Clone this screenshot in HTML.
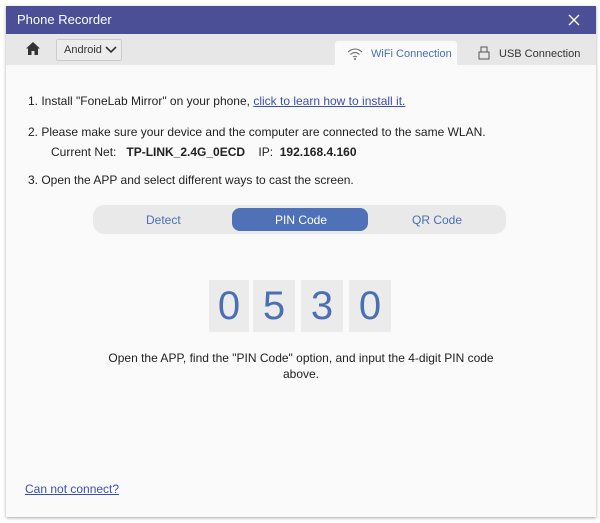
<!DOCTYPE html><html><head><style>
body{margin:0;width:600px;height:523px;background:#fff;font-family:"Liberation Sans",sans-serif;position:relative;overflow:hidden}
.win{position:absolute;left:6px;top:6px;width:590px;height:511px;background:#fafafa;box-shadow:0 1px 3px rgba(0,0,0,.35)}
.title{position:absolute;left:0;top:0;width:590px;height:28px;background:#4b4f96;color:#fff;font-size:13px;line-height:28px}
.tb{position:absolute;left:0;top:28px;width:590px;height:31px;background:#e7e7e7}
.t{position:absolute;font-size:12px;color:#222;white-space:nowrap}
.digit{position:absolute;top:274px;width:42px;height:52px;background:#ebebeb;color:#4a6fb5;font-size:40px;text-align:center;line-height:52px}
</style></head><body><div class="win">
<div class="title"><span style="position:absolute;left:11px">Phone Recorder</span>
<svg style="position:absolute;left:562px;top:8px" width="12" height="12"><path d="M1 1L11 11M11 1L1 11" stroke="#fff" stroke-width="1.3"/></svg></div>
<div class="tb">
<svg style="position:absolute;left:20px;top:8px" width="14" height="13"><path d="M7 0L0 6.5H2V13H5.5V9H8.5V13H12V6.5H14Z" fill="#333"/></svg>
<div style="position:absolute;left:50px;top:5px;width:64px;height:20px;border:1px solid #ccc;background:#ececec;border-radius:2px;font-size:11px;line-height:20px;color:#333"><span style="margin-left:7px">Android</span>
<svg style="position:absolute;left:48px;top:6px" width="12" height="8"><path d="M1 1L6 6L11 1" stroke="#333" stroke-width="1.6" fill="none"/></svg></div>
<div style="position:absolute;left:329px;top:7px;width:122px;height:24px;background:#fafafa;border-radius:3px 3px 0 0"></div>
<svg style="position:absolute;left:341px;top:13px" width="16" height="13"><path d="M1 5Q8 -1 15 5M3.5 7.5Q8 3.5 12.5 7.5M6 10Q8 8.5 10 10" stroke="#666" fill="none" stroke-width="1"/><circle cx="8" cy="12" r="1" fill="#666"/></svg>
<span class="t" style="left:365px;top:14px;font-size:11px;color:#4a6fb5">WiFi Connection</span>
<svg style="position:absolute;left:472px;top:12px" width="12" height="14"><rect x="3" y="1" width="6" height="5" stroke="#555" fill="none"/><rect x="1" y="6" width="10" height="7" stroke="#555" fill="none"/></svg>
<span class="t" style="left:493px;top:14px;font-size:11px;color:#333">USB Connection</span>
</div>
<span class="t" style="left:22px;top:88px">1. Install "FoneLab Mirror" on your phone, <span style="color:#3a4fb0;text-decoration:underline">click to learn how to install it.</span></span>
<span class="t" style="left:22px;top:119px">2. Please make sure your device and the computer are connected to the same WLAN.</span>
<span class="t" style="left:45px;top:139px">Current Net:&nbsp;&nbsp;&nbsp;<b>TP-LINK_2.4G_0ECD</b>&nbsp;&nbsp;&nbsp;&nbsp;IP:&nbsp;&nbsp;<b>192.168.4.160</b></span>
<span class="t" style="left:22px;top:167px">3. Open the APP and select different ways to cast the screen.</span>
<div style="position:absolute;left:87px;top:199px;width:413px;height:29px;background:#e9e9e9;border-radius:11px"></div>
<div style="position:absolute;left:226px;top:202px;width:136px;height:23px;background:#4e71b8;border-radius:8px"></div>
<span class="t" style="left:140px;top:207px;color:#4a6fb5">Detect</span>
<span class="t" style="left:269px;top:207px;color:#fff">PIN Code</span>
<span class="t" style="left:406px;top:207px;color:#4a6fb5">QR Code</span>
<div class="digit" style="left:203px;width:40px">0</div><div class="digit" style="left:247px">5</div><div class="digit" style="left:295px">3</div><div class="digit" style="left:343px">0</div>
<div class="t" style="left:0;width:590px;text-align:center;top:344px;line-height:16px">Open the APP, find the "PIN Code" option, and input the 4-digit PIN code<br>above.</div>
<span class="t" style="left:19px;top:476px;color:#3a4fb0;text-decoration:underline">Can not connect?</span>
</div></body></html>
